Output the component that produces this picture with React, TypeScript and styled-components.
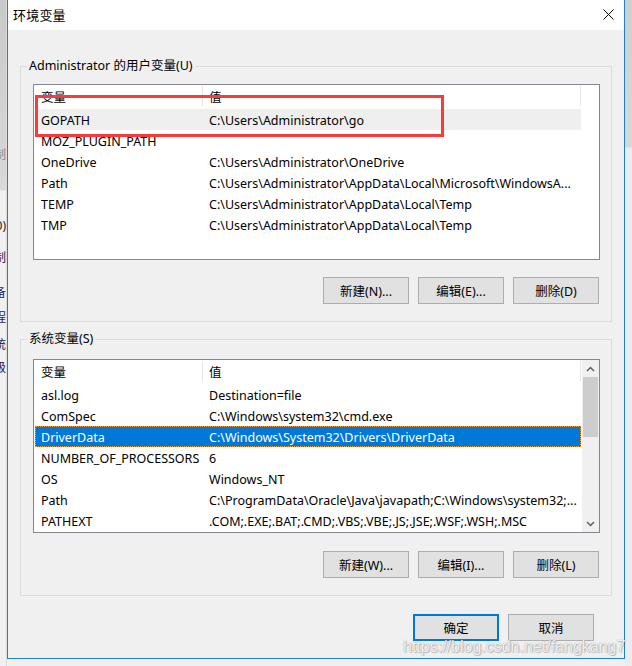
import React from "react";
import styled, { createGlobalStyle } from "styled-components";

const GlobalStyle = createGlobalStyle`
  html, body { margin: 0; padding: 0; background: #f0f0f0; }
  body { font-family: "Noto Sans", "Noto Sans CJK SC", sans-serif; font-size: 12.5px; color: #000; }
  * { box-sizing: border-box; }
`;

const UI_FONT = `"Noto Sans", "Noto Sans CJK SC", sans-serif`;

const Desktop = styled.div`
  position: relative;
  display: flex;
  width: 632px;
  height: 666px;
  overflow: hidden;
  background: #f0f0f0;
`;

const BackStrip = styled.div`
  width: 7px;
  flex: none;
  display: flex;
  flex-direction: column;
  overflow: hidden;
  background: linear-gradient(to bottom, #c9c9c9 0px, #d9d9d9 190px, #f0f0f0 191px, #f0f0f0 100%);
  border-right: 1px solid #dcdcdc;
`;

const BackLine = styled.div<{ $top: number; $color: string }>`
  display: flex;
  justify-content: flex-end;
  margin-top: ${(p) => p.$top}px;
  height: 16px;
  line-height: 16px;
  white-space: nowrap;
  font-family: ${UI_FONT};
  font-size: 12px;
  color: ${(p) => p.$color};
`;

const RightStrip = styled.div`
  flex: 1;
  background: linear-gradient(to bottom, #cfcfcf 0px, #d8d8d8 147px, #ececec 148px, #ececec 100%);
`;

const Dialog = styled.div`
  width: 618px;
  height: 659px;
  flex: none;
  display: flex;
  flex-direction: column;
  background: #f0f0f0;
  border: 1px solid #1c7fd4;
  border-top: none;
`;

const TitleBar = styled.div`
  height: 30px;
  flex: none;
  background: #fff;
  display: flex;
  align-items: center;
  justify-content: space-between;
  padding: 0 10px 1px 5px;
`;

const TitleText = styled.span`
  font-family: ${UI_FONT};
  font-size: 13px;
  letter-spacing: 0.2px;
`;

const Body = styled.div`
  flex: 1;
  display: flex;
  flex-direction: column;
  padding: 36px 12px 17px 12px;
`;

const Group = styled.section<{ $padTop: number }>`
  position: relative;
  border: 1px solid #dcdcdc;
  padding: ${(p) => p.$padTop}px 11px 17px 12px;
  display: flex;
  flex-direction: column;
  & + & {
    margin-top: 17px;
  }
`;

const GroupLabel = styled.span`
  position: absolute;
  top: -9px;
  left: 6px;
  padding: 0 2px;
  line-height: 16px;
  background: #f0f0f0;
  white-space: nowrap;
`;

const ListBox = styled.div<{ $height: number }>`
  position: relative;
  height: ${(p) => p.$height}px;
  background: #fff;
  border: 1px solid #828790;
  display: flex;
`;

const ListMain = styled.div`
  flex: 1;
  display: flex;
  flex-direction: column;
  min-width: 0;
`;

const HeaderRow = styled.div`
  display: flex;
  height: 24px;
  flex: none;
`;

const HeaderCell = styled.div<{ $width: number; $pad: number }>`
  width: ${(p) => p.$width}px;
  flex: none;
  display: flex;
  align-items: center;
  padding-left: ${(p) => p.$pad}px;
  padding-top: 1px;
  border-right: 1px solid #e5e5e5;
  margin: 1px 0 3px;
`;

const Row = styled.div<{ $state?: "hover" | "selected" }>`
  display: flex;
  align-items: center;
  height: 21px;
  padding-top: 1px;
  flex: none;
  width: 546px;
  margin-left: 1px;
  white-space: nowrap;
  background: ${(p) =>
    p.$state === "selected" ? "#0078d7" : p.$state === "hover" ? "#efefef" : "transparent"};
  color: ${(p) => (p.$state === "selected" ? "#fff" : "#000")};
  outline: ${(p) => (p.$state === "selected" ? "1px dotted #f39a3c" : "none")};
  outline-offset: -1px;
`;

const Cell = styled.div<{ $width?: number; $pad: number }>`
  ${(p) => (p.$width ? `width: ${p.$width}px; flex: none;` : "flex: 1; min-width: 0;")}
  padding-left: ${(p) => p.$pad}px;
  overflow: hidden;
  white-space: nowrap;
`;

const ScrollBar = styled.div`
  width: 17px;
  flex: none;
  display: flex;
  flex-direction: column;
  background: #f0f0f0;
`;

const ScrollArrow = styled.div`
  height: 17px;
  flex: none;
  display: flex;
  align-items: center;
  justify-content: center;
`;

const ScrollTrack = styled.div`
  flex: 1;
  display: flex;
  flex-direction: column;
`;

const ScrollThumb = styled.div`
  height: 60px;
  margin: 0 1px;
  background: #cdcdcd;
`;

const ButtonRow = styled.div<{ $mt: number; $mr: number }>`
  display: flex;
  justify-content: flex-end;
  gap: 9px;
  margin-top: ${(p) => p.$mt}px;
  margin-right: ${(p) => p.$mr}px;
`;

const Button = styled.button<{ $default?: boolean }>`
  width: 86px;
  height: 27px;
  padding: 0;
  font-family: ${UI_FONT};
  font-size: 12.5px;
  color: #000;
  background: #e1e1e1;
  border: ${(p) => (p.$default ? "2px solid #0078d7" : "1px solid #adadad")};
  display: flex;
  align-items: center;
  justify-content: center;
`;

const Annotation = styled.div`
  position: absolute;
  left: 1px;
  top: 10px;
  width: 409px;
  height: 42px;
  border: 3px solid #fb3a3a;
  pointer-events: none;
`;

const Watermark = styled.div`
  position: absolute;
  left: 403px;
  top: 638px;
  font-family: "Liberation Sans", Arial, sans-serif;
  font-size: 16px;
  color: rgba(255, 255, 255, 0.9);
  text-shadow: 0 0 1px rgba(120, 120, 120, 0.9), 1px 1px 1px rgba(0, 0, 0, 0.2);
  white-space: nowrap;
  pointer-events: none;
`;

type Item = { name: string; value: string; state?: "hover" | "selected" };

const userVars: Item[] = [
  { name: "GOPATH", value: "C:\\Users\\Administrator\\go", state: "hover" },
  { name: "MOZ_PLUGIN_PATH", value: "" },
  { name: "OneDrive", value: "C:\\Users\\Administrator\\OneDrive" },
  { name: "Path", value: "C:\\Users\\Administrator\\AppData\\Local\\Microsoft\\WindowsA..." },
  { name: "TEMP", value: "C:\\Users\\Administrator\\AppData\\Local\\Temp" },
  { name: "TMP", value: "C:\\Users\\Administrator\\AppData\\Local\\Temp" },
];

const sysVars: Item[] = [
  { name: "asl.log", value: "Destination=file" },
  { name: "ComSpec", value: "C:\\Windows\\system32\\cmd.exe" },
  { name: "DriverData", value: "C:\\Windows\\System32\\Drivers\\DriverData", state: "selected" },
  { name: "NUMBER_OF_PROCESSORS", value: "6" },
  { name: "OS", value: "Windows_NT" },
  { name: "Path", value: "C:\\ProgramData\\Oracle\\Java\\javapath;C:\\Windows\\system32;..." },
  { name: "PATHEXT", value: ".COM;.EXE;.BAT;.CMD;.VBS;.VBE;.JS;.JSE;.WSF;.WSH;.MSC" },
];

const Chevron = ({ up }: { up?: boolean }) => (
  <svg width="9" height="6" viewBox="0 0 9 6">
    <path
      d={up ? "M1 5 L4.5 1.5 L8 5" : "M1 1 L4.5 4.5 L8 1"}
      fill="none"
      stroke="#606060"
      strokeWidth="1.5"
    />
  </svg>
);

const CloseIcon = () => (
  <svg width="11" height="11" viewBox="0 0 11 11">
    <path d="M0.5 0.5 L10.5 10.5 M10.5 0.5 L0.5 10.5" stroke="#000" strokeWidth="1" />
  </svg>
);

const VarList = ({
  items,
  height,
  scroll,
  annotate,
}: {
  items: Item[];
  height: number;
  scroll?: boolean;
  annotate?: boolean;
}) => (
  <ListBox $height={height}>
    <ListMain>
      <HeaderRow>
        <HeaderCell $width={169} $pad={7}>变量</HeaderCell>
        <HeaderCell $width={378} $pad={6}>值</HeaderCell>
      </HeaderRow>
      {items.map((it) => (
        <Row key={it.name} $state={it.state}>
          <Cell $width={168} $pad={6}>{it.name}</Cell>
          <Cell $pad={6}>{it.value}</Cell>
        </Row>
      ))}
    </ListMain>
    {scroll && (
      <ScrollBar>
        <ScrollArrow>
          <Chevron up />
        </ScrollArrow>
        <ScrollTrack>
          <ScrollThumb />
        </ScrollTrack>
        <ScrollArrow>
          <Chevron />
        </ScrollArrow>
      </ScrollBar>
    )}
    {annotate && <Annotation />}
  </ListBox>
);

const backLines: { top: number; text: string; color: string }[] = [
  { top: 147, text: "制", color: "#8a8a8a" },
  { top: 55, text: "0)", color: "#222" },
  { top: 16, text: "制", color: "#1e2450" },
  { top: 19, text: "备", color: "#1e2450" },
  { top: 9, text: "程", color: "#1e2450" },
  { top: 11, text: "统", color: "#1e2450" },
  { top: 7, text: "级", color: "#1e2450" },
];

export default function App() {
  return (
    <>
      <GlobalStyle />
      <Desktop>
        <BackStrip>
          {backLines.map((l, i) => (
            <BackLine key={i} $top={l.top} $color={l.color}>
              {l.text}
            </BackLine>
          ))}
        </BackStrip>
        <Dialog>
          <TitleBar>
            <TitleText>环境变量</TitleText>
            <CloseIcon />
          </TitleBar>
          <Body>
            <Group $padTop={17}>
              <GroupLabel>Administrator 的用户变量(U)</GroupLabel>
              <VarList items={userVars} height={176} annotate />
              <ButtonRow $mt={17} $mr={1}>
                <Button>新建(N)...</Button>
                <Button>编辑(E)...</Button>
                <Button>删除(D)</Button>
              </ButtonRow>
            </Group>
            <Group $padTop={19}>
              <GroupLabel>系统变量(S)</GroupLabel>
              <VarList items={sysVars} height={174} scroll />
              <ButtonRow $mt={18} $mr={1}>
                <Button>新建(W)...</Button>
                <Button>编辑(I)...</Button>
                <Button>删除(L)</Button>
              </ButtonRow>
            </Group>
            <ButtonRow $mt={18} $mr={18}>
              <Button $default>确定</Button>
              <Button>取消</Button>
            </ButtonRow>
          </Body>
        </Dialog>
        <RightStrip />
        <Watermark>https://blog.csdn.net/fangkang7</Watermark>
      </Desktop>
    </>
  );
}
